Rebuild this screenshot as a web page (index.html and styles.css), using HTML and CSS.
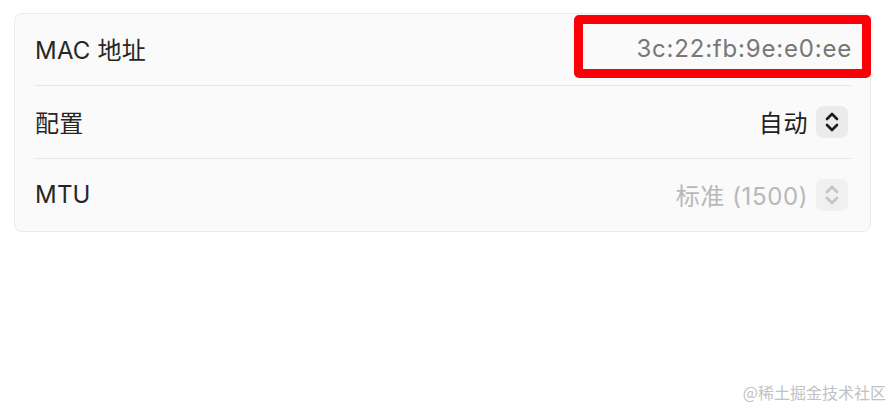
FILE: index.html
```html
<!DOCTYPE html>
<html lang="zh">
<head>
<meta charset="utf-8">
<link rel="stylesheet" href="styles.css">
</head>
<body>
<div class="page">
  <section class="card">
    <div class="row">
      <span class="label">MAC 地址</span>
      <span class="value mac">3c:22:fb:9e:e0:ee</span>
    </div>
    <div class="divider"></div>
    <div class="row">
      <span class="label">配置</span>
      <span class="control">
        <span class="value">自动</span>
        <span class="stepper">
          <svg width="16" height="24" viewBox="0 0 16 24"><path d="M3 9 L8 4 L13 9 M3 15 L8 20 L13 15" fill="none" stroke="#1c1c1c" stroke-width="2.6" stroke-linecap="round" stroke-linejoin="round"/></svg>
        </span>
      </span>
    </div>
    <div class="divider"></div>
    <div class="row">
      <span class="label">MTU</span>
      <span class="control disabled">
        <span class="value">标准 (1500)</span>
        <span class="stepper">
          <svg width="16" height="24" viewBox="0 0 16 24"><path d="M3 9 L8 4 L13 9 M3 15 L8 20 L13 15" fill="none" stroke="#c4c4c4" stroke-width="2.6" stroke-linecap="round" stroke-linejoin="round"/></svg>
        </span>
      </span>
    </div>
    <div class="highlight"></div>
  </section>
  <div class="watermark">@稀土掘金技术社区</div>
</div>
</body>
</html>
```
FILE: styles.css
```css
html, body {
  margin: 0;
  padding: 0;
  background: #ffffff;
}
body {
  font-family: Inter, "Noto Sans CJK SC", sans-serif;
  width: 894px;
  height: 410px;
  overflow: hidden;
}
.page {
  position: relative;
  height: 410px;
  box-sizing: border-box;
  padding: 13px 23px 0 14px;
}
.card {
  position: relative;
  background: #fafafa;
  border: 1px solid #ebebeb;
  border-radius: 8px;
  padding: 0 19px 0 20px;
}
.row {
  height: 72px;
  display: flex;
  align-items: center;
  justify-content: space-between;
}
.row:first-child {
  height: 71px;
}
.divider {
  height: 1px;
  background: #e6e6e6;
}
.label {
  font-size: 24px;
  color: #262626;
  margin-top: -2px;
  letter-spacing: 0.2px;
}
.value {
  font-size: 24px;
  color: #1f1f1f;
  margin-top: -2px;
}
.mac {
  color: #777777;
  letter-spacing: 0.8px;
  margin-right: -1px;
}
.control {
  display: flex;
  align-items: center;
  gap: 8px;
}
.control .value {
  letter-spacing: 0.6px;
}
.control.disabled .value {
  color: #b8b8b8;
}
.stepper {
  width: 32px;
  height: 32px;
  margin-right: 3px;
  border-radius: 7px;
  background: #ebebeb;
  display: flex;
  align-items: center;
  justify-content: center;
}
.control.disabled .stepper {
  background: #f0f0f0;
}
.highlight {
  position: absolute;
  left: 559px;
  top: 1px;
  width: 297px;
  height: 63px;
  box-sizing: border-box;
  border: 9.5px solid #fa0008;
  border-radius: 5px;
}
.watermark {
  position: absolute;
  right: 8px;
  bottom: 6px;
  font-family: "Noto Sans CJK SC", sans-serif;
  font-size: 16px;
  color: #c2c2c2;
}
```
